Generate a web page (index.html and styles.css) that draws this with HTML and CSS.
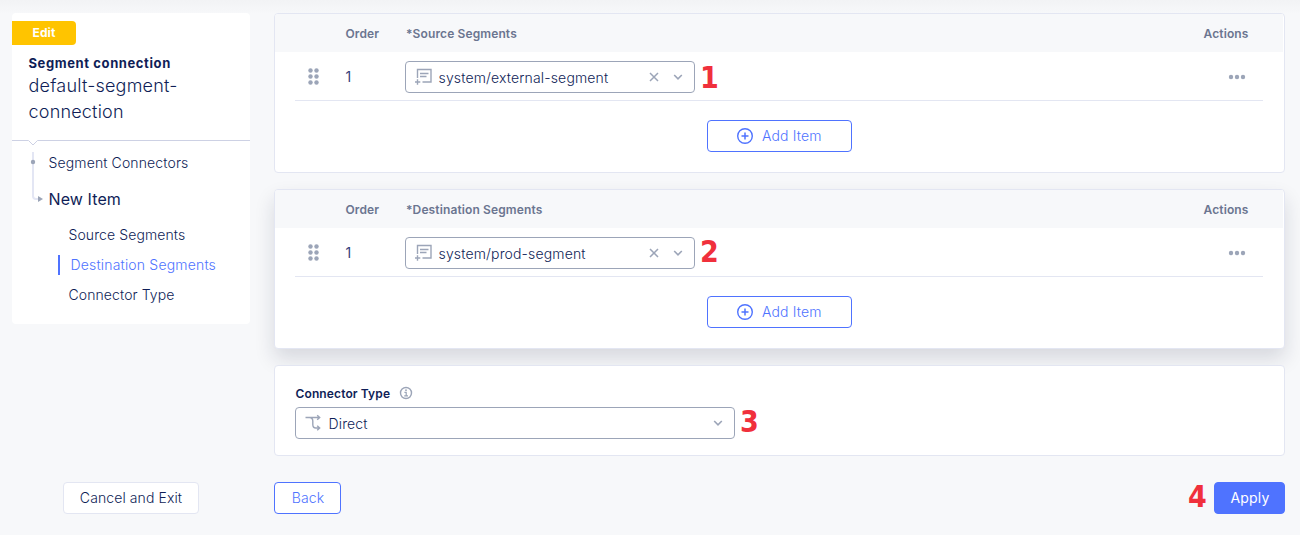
FILE: index.html
```html
<!DOCTYPE html>
<html lang="en">
<head>
<meta charset="utf-8">
<title>Segment connection</title>
<link rel="stylesheet" href="styles.css">
</head>
<body>
<svg width="0" height="0" class="defs">
  <symbol id="grip" viewBox="0 0 12 17"><g fill="#9ca5b8"><circle cx="2.5" cy="2.5" r="2.2"/><circle cx="8.5" cy="2.5" r="2.2"/><circle cx="2.5" cy="8.5" r="2.2"/><circle cx="8.5" cy="8.5" r="2.2"/><circle cx="2.5" cy="14.5" r="2.2"/><circle cx="8.5" cy="14.5" r="2.2"/></g></symbol>
  <symbol id="segment" viewBox="0 0 18 18"><path d="M2.500 10V1.500h13.500v12.500H7.500M5 5.500h8.500M5 8.500h6.500M2.500 11.200v5.600M-.3 14h5.600" fill="none" stroke="#9ca5b8" stroke-width="1.400"/></symbol>
  <symbol id="cross" viewBox="0 0 10 10"><path d="M1 1l8 8M9 1l-8 8" fill="none" stroke="#9ca5b8" stroke-width="1.5"/></symbol>
  <symbol id="chevron" viewBox="0 0 10 10"><path d="M1.200 3l3.800 3.800L8.800 3" fill="none" stroke="#9ca5b8" stroke-width="1.6"/></symbol>
  <symbol id="plus" viewBox="0 0 16 16"><path d="M8 4.500v7M4.500 8h7" stroke="#4f73ff" stroke-width="1.5"/><circle cx="8" cy="8" r="7.300" fill="none" stroke="#4f73ff" stroke-width="1.400"/></symbol>
  <symbol id="dots" viewBox="0 0 18 6"><g fill="#9ca5b8"><circle cx="3" cy="3" r="2.200"/><circle cx="9" cy="3" r="2.200"/><circle cx="15" cy="3" r="2.200"/></g></symbol>
  <symbol id="info" viewBox="0 0 14 14"><circle cx="7" cy="7" r="5.500" fill="none" stroke="#9ca5b8" stroke-width="1.400"/><path d="M5.400 6.300h1.800v3.500M5.200 9.800h3.800" fill="none" stroke="#9ca5b8" stroke-width="1.200"/><circle cx="7" cy="4.200" r=".9" fill="#9ca5b8"/></symbol>
  <symbol id="direct" viewBox="0 0 18 18"><path d="M.5 3.500h14M12.200 1.200l2.500 2.300-2.500 2.300M4.500 3.500c2.400.2 3.300 1.300 3.300 3.500v3.500c0 2.500.8 3.500 3 3.500h3.700M12.200 11.700l2.500 2.300-2.500 2.300" fill="none" stroke="#9ca5b8" stroke-width="1.400"/></symbol>
</svg>
<div class="page">
  <aside class="sidebar">
    <div class="nav-card">
      <span class="tag">Edit</span>
      <div class="kind">Segment connection</div>
      <div class="name">default-segment-<br>connection</div>
      <svg class="divider" viewBox="0 0 238 8"><path d="M0 1.500H16.500L21 6L25.500 1.500H238" fill="none" stroke="#cdd1e4"/></svg>
      <nav class="tree">
        <svg class="branch" viewBox="0 0 14 54"><path d="M3 1v44q0 3 3 3h3" fill="none" stroke="#e3e6f4" stroke-width="2"/><circle cx="3" cy="11" r="2.200" fill="#9ca5b8"/><path d="M8 45l5 3-5 3z" fill="#9ca5b8"/></svg>
        <div class="links">
          <a class="top">Segment Connectors</a>
          <a class="current">New Item</a>
          <a class="sub">Source Segments</a>
          <a class="sub active">Destination Segments</a>
          <a class="sub">Connector Type</a>
        </div>
      </nav>
    </div>
    <button class="btn plain">Cancel and Exit</button>
  </aside>
  <main class="main">
    <section class="card table">
      <header class="head"><span>Order</span><span class="source">*Source Segments</span><span class="acts">Actions</span></header>
      <div class="row">
        <svg class="grip"><use href="#grip"/></svg><span class="num">1</span>
        <div class="field"><div class="select"><svg class="seg"><use href="#segment"/></svg><span class="value">system/external-segment</span><svg class="x"><use href="#cross"/></svg><svg class="chev"><use href="#chevron"/></svg></div><b class="step lower">1</b></div>
        <svg class="dots"><use href="#dots"/></svg>
      </div>
      <button class="btn outline add"><svg class="plus"><use href="#plus"/></svg>Add Item</button>
    </section>
    <section class="card table raised">
      <header class="head"><span>Order</span><span>*Destination Segments</span><span class="acts">Actions</span></header>
      <div class="row">
        <svg class="grip"><use href="#grip"/></svg><span class="num">1</span>
        <div class="field"><div class="select"><svg class="seg"><use href="#segment"/></svg><span class="value">system/prod-segment</span><svg class="x"><use href="#cross"/></svg><svg class="chev"><use href="#chevron"/></svg></div><b class="step">2</b></div>
        <svg class="dots"><use href="#dots"/></svg>
      </div>
      <button class="btn outline add"><svg class="plus"><use href="#plus"/></svg>Add Item</button>
    </section>
    <section class="card type">
      <div class="label">Connector Type<svg class="info"><use href="#info"/></svg></div>
      <div class="field"><div class="select wide"><svg class="seg"><use href="#direct"/></svg><span class="value">Direct</span><svg class="chev"><use href="#chevron"/></svg></div><b class="step raise">3</b></div>
    </section>
    <footer class="foot"><button class="btn outline back">Back</button><b class="step">4</b><button class="btn primary">Apply</button></footer>
  </main>
</div>
</body>
</html>
```
FILE: styles.css
```css
* { box-sizing: border-box; }
body { margin: 0; background: #f7f8fa; font: 14px/20px Inter, sans-serif; color: #0f1e57; }
.defs { position: absolute; }
svg { display: block; flex: none; }
.page { display: grid; grid-template-columns: 238px 1011px; column-gap: 24px; height: 535px; padding: 13px 0 0 12px; overflow: hidden; background: linear-gradient(#f2f3f5, #f7f8fa 14px); }
.sidebar { display: flex; flex-direction: column; justify-content: space-between; height: 501px; }
.nav-card { height: 311px; padding-top: 8px; background: #fff; border-radius: 4px; }
.tag { display: block; width: 64px; height: 24px; line-height: 24px; text-align: center; background: #ffc400; color: #fff; font-weight: 700; font-size: 12px; letter-spacing: .1px; border-radius: 0 4px 4px 0; }
.kind { margin: 8px 0 0 16.5px; font-size: 13px; line-height: 20px; font-weight: 700; letter-spacing: .6px; }
.name { margin-left: 16.5px; font-size: 18px; line-height: 26px; font-weight: 300; letter-spacing: .2px; }
.divider { width: 238px; height: 8px; margin-top: 14px; }
.tree { display: flex; padding: 4px 0 0 18px; }
.branch { width: 14px; height: 54px; }
.links { display: flex; flex-direction: column; flex: 1; padding: 2px 0 0 4.5px; font-weight: 300; }
.top { height: 20px; letter-spacing: .13px; }
.current { height: 24px; line-height: 24px; margin: 14px 0; font-size: 16px; font-weight: 400; letter-spacing: .1px; }
.sub { height: 20px; margin: 0 0 10px 20px; letter-spacing: .1px; }
.sub.active { margin-left: 9.5px; padding-left: 10.5px; border-left: 2px solid #4f73ff; color: #4f73ff; letter-spacing: .18px; }
.btn { display: flex; align-items: center; justify-content: center; height: 32px; padding: 0; border: 1px solid #e3e6f2; border-radius: 4px; background: #fff; color: #0f1e57; font: 300 14px/20px Inter, sans-serif; letter-spacing: .15px; }
.plain { width: 136px; margin-left: 51px; letter-spacing: .1px; }
.outline { border-color: #4f73ff; color: #4f73ff; }
.primary { width: 71px; padding-left: 1px; background: #4f73ff; border-color: #4f73ff; color: #fff; font-weight: 400; }
.main { display: flex; flex-direction: column; gap: 16px; }
.card { background: #fff; border: 1px solid #e3e6f2; border-radius: 4px; }
.table { height: 160px; }
.raised { box-shadow: 0 10px 20px rgba(20, 25, 60, .14); }
.head { display: grid; grid-template-columns: 60.5px 1fr auto; height: 38px; padding: 2px 34.5px 0 70.5px; margin-right: 1px; align-items: center; background: #f7f8fa; color: #6b7590; font-weight: 600; font-size: 12px; letter-spacing: .12px; border-radius: 3px 0 0; }
.row { display: grid; grid-template-columns: 51px 59px 1fr 18px; align-items: center; height: 49px; margin: 0 21px 0 20px; padding: 1px 17px 0 0; border-bottom: 1px solid #e3e6f2; }
.grip { width: 12px; height: 17px; margin-left: 13px; }
.num { color: #35427a; margin-left: -.5px; }
.field { display: flex; align-items: center; }
.select { display: flex; align-items: center; width: 290px; height: 32px; padding: 0 11px 0 9px; border: 1px solid #9ca5b8; border-radius: 4px; background: #fff; }
.seg { width: 18px; height: 18px; overflow: visible; }
.seg use { overflow: visible; }
.value { flex: 1; padding: 2px 0 0 5.5px; font-weight: 300; letter-spacing: .15px; }
.x { width: 10px; height: 10px; margin-right: 14px; }
.chev { width: 10px; height: 10px; }
.step { width: 19px; margin-left: 5px; color: #f0303c; font: 700 30px/30px "DejaVu Sans Condensed", "DejaVu Sans", sans-serif; font-stretch: condensed; }
.lower { padding-top: 2px; }
.foot .step, .raise { padding-bottom: 2px; }
.table .step:not(.lower) { padding-bottom: 1px; }
.dots { width: 18px; height: 6px; }
.add { width: 145px; margin: 19px auto 0; }
.plus { width: 16px; height: 16px; margin-right: 8.5px; }
.type { height: 91px; padding: 18px 20px 0; }
.label { display: flex; align-items: center; height: 20px; padding-left: .5px; font-size: 12px; font-weight: 600; letter-spacing: .12px; }
.info { width: 14px; height: 14px; margin: -2px 0 0 9px; }
.type .field { margin-top: 3px; }
.wide { width: 440px; }
.foot { display: flex; align-items: center; margin-top: 10px; height: 32px; }
.back { width: 67px; margin-right: auto; padding-left: 1px; }
.foot .step { margin-right: 7px; }
```
